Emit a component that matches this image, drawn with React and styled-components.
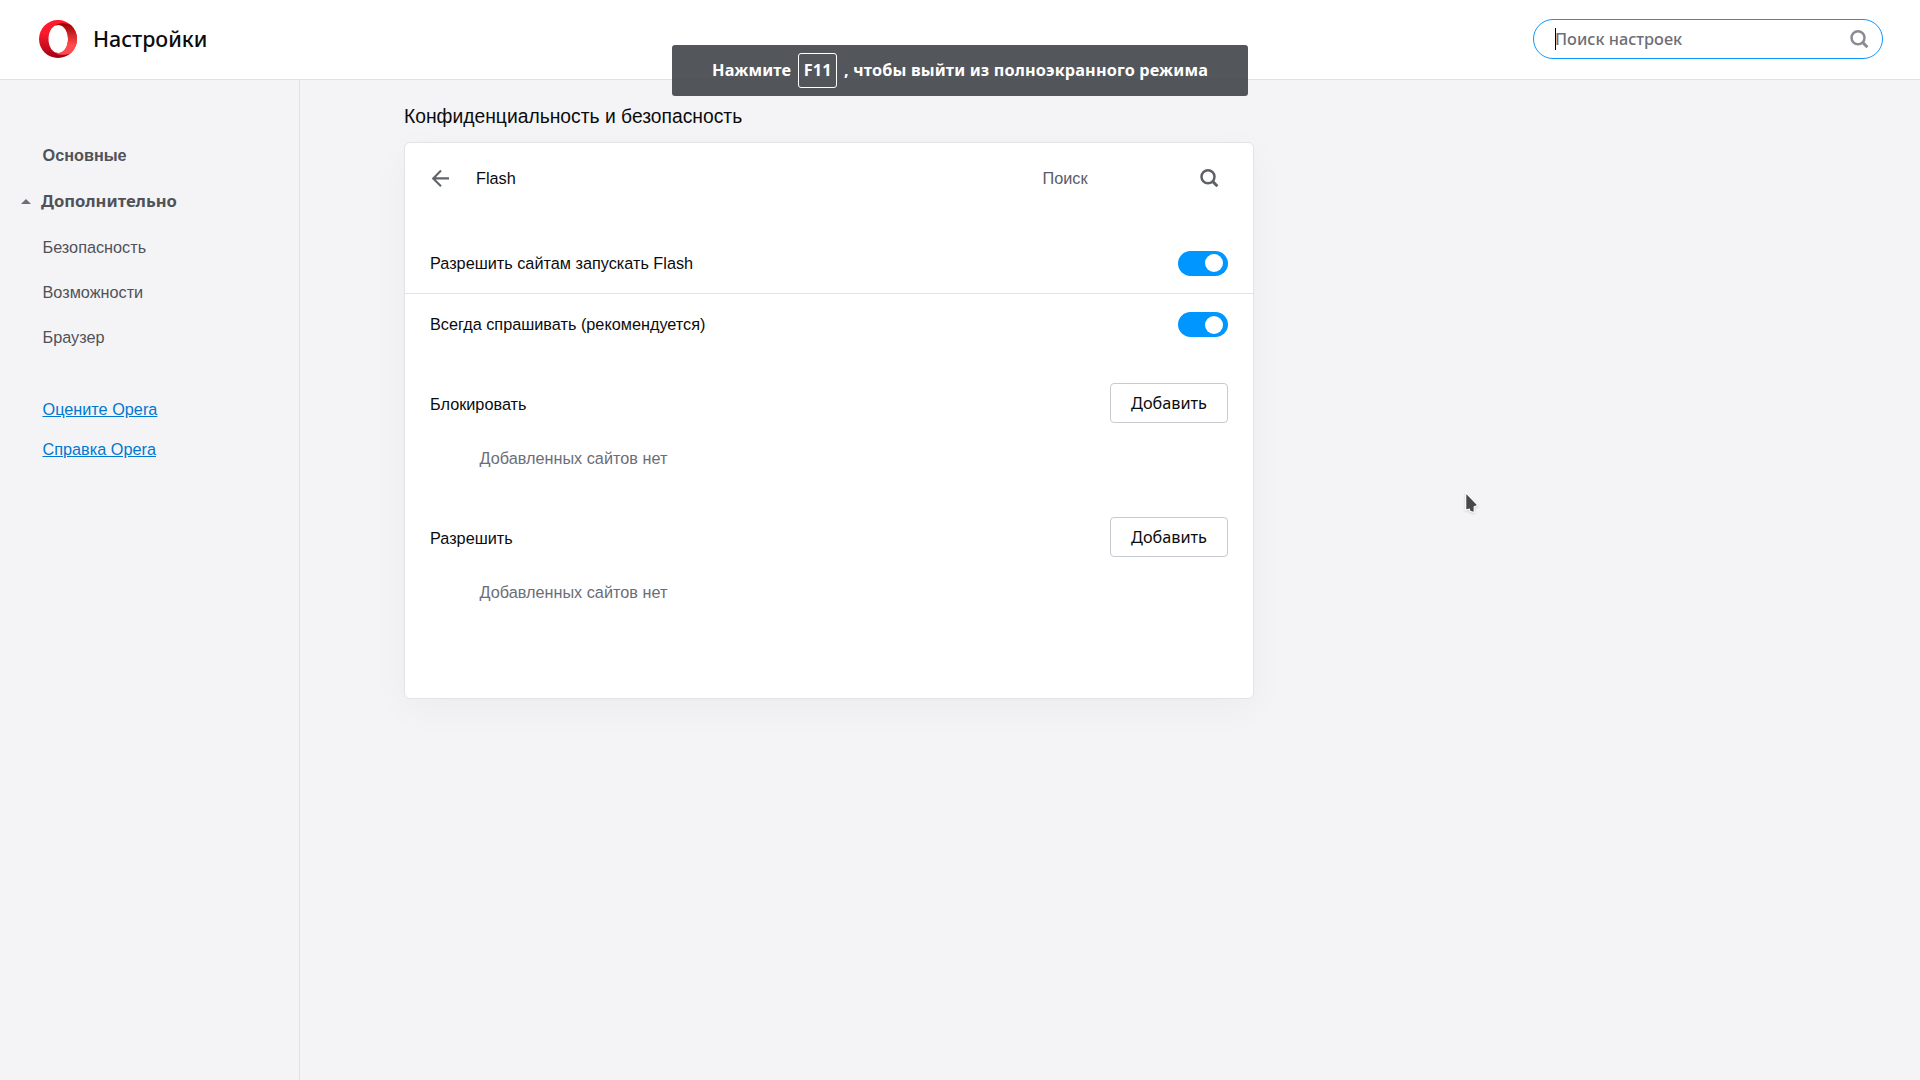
import React from 'react';
import styled, { createGlobalStyle } from 'styled-components';

const SANS = '"Liberation Sans", Arial, sans-serif';
const NOTO = '"Noto Sans", sans-serif';

const GlobalStyle = createGlobalStyle`
  *, *::before, *::after { box-sizing: border-box; }
  body { margin: 0; background: #f4f4f7; overflow: hidden; }
`;

const Page = styled.div`
  position: relative;
  display: flex;
  flex-direction: column;
  width: 1920px;
  height: 1080px;
  overflow: hidden;
  background: #f4f4f7;
  color: #0b0c0e;
  font: 16.25px/20px ${SANS};
`;

const Header = styled.header`
  display: flex;
  align-items: center;
  flex: none;
  height: 80px;
  padding: 0 37px 2px 39px;
  background: #fff;
  border-bottom: 1px solid #e1e1e4;
`;

const Logo = styled.svg`
  width: 38px;
  height: 38px;
  margin-right: 16px;
`;

const Title = styled.h1`
  flex: 1;
  margin: 0;
  padding-top: 1px;
  font: 500 21.4px/28px ${NOTO};
`;

const SearchBox = styled.div`
  display: flex;
  align-items: center;
  width: 350px;
  height: 40px;
  padding: 0 13px 0 21px;
  border: 1px solid #0c97fb;
  border-radius: 20px;
  color: #6d6e78;
  font: 500 16.3px/22px ${NOTO};
`;

const Caret = styled.span`
  width: 1px;
  height: 22px;
  margin-right: -1px;
  background: #000;
`;

const Placeholder = styled.span`
  flex: 1;
`;

const Icon = styled.svg`
  flex: none;
  display: block;
  width: ${(p) => p.$size}px;
  height: ${(p) => p.$size}px;
  color: ${(p) => p.$color};
`;

const Body = styled.div`
  display: flex;
  flex: 1;
`;

const Sidebar = styled.nav`
  display: flex;
  flex-direction: column;
  width: 300px;
  padding-top: 52px;
  border-right: 1px solid #e1e1e4;
  color: #505257;
`;

const NavItem = styled.div`
  display: flex;
  align-items: center;
  height: 45px;
  padding-left: 42.5px;
  font-weight: ${(p) => (p.$bold ? 700 : 400)};
`;

const NavGroup = styled(NavItem)`
  height: 47px;
  padding: 1px 0 0 21px;
  font: 700 16.6px/22px ${NOTO};
`;

const Triangle = styled.span`
  width: 0;
  margin-right: 10px;
  border: 5px solid transparent;
  border-top: 0;
  border-bottom-color: #6d6e78;
`;

const Links = styled.div`
  display: flex;
  flex-direction: column;
  margin-top: 30px;
`;

const NavLink = styled.a`
  display: flex;
  align-items: center;
  height: 40px;
  padding-left: 42.5px;
  color: #0078d2;
  text-decoration: underline;
`;

const Main = styled.main`
  padding: 25px 0 0 104px;
`;

const SectionTitle = styled.h2`
  margin: 0 0 13px;
  font: 400 19.3px/24px ${SANS};
`;

const Card = styled.section`
  width: 850px;
  height: 557px;
  background: #fff;
  border: 1px solid #e3e3e6;
  border-radius: 6px;
  box-shadow: 0 10px 38px rgba(0, 0, 0, 0.035);
`;

const CardHeader = styled.div`
  display: flex;
  align-items: center;
  height: 70px;
  margin-bottom: 20px;
  padding: 0 34px 0 25px;
`;

const CardTitle = styled.span`
  flex: 1;
  margin-left: 26px;
`;

const CardSearch = styled.span`
  width: 156.5px;
  color: #5a5c66;
`;

const ToggleRow = styled.div`
  display: flex;
  align-items: center;
  justify-content: space-between;
  height: ${(p) => (p.$divided ? 62 : 60)}px;
  padding: 0 25px;
  border-top: ${(p) => (p.$divided ? '1px solid #e3e3e6' : '0')};
`;

const RowLabel = styled.span`
  padding-bottom: ${(p) => (p.$divided ? 2 : 0)}px;
`;

const Toggle = styled.span`
  display: flex;
  align-items: center;
  justify-content: flex-end;
  width: 50px;
  height: 25px;
  padding-right: 5px;
  border-radius: 13px;
  background: #0096ff;

  &::after {
    content: '';
    width: 18px;
    height: 18px;
    border-radius: 50%;
    background: #fff;
  }
`;

const SiteList = styled.div`
  height: 134px;
  padding: 28px 25px 0;
`;

const ListHead = styled.div`
  display: flex;
  align-items: center;
  justify-content: space-between;
  height: 40px;
`;

const ListTitle = styled.span`
  padding-top: 1px;
`;

const Button = styled.button`
  width: 118px;
  height: 40px;
  padding: 0;
  border: 1px solid #c9c9d0;
  border-radius: 4px;
  background: #fff;
  color: #0b0c0e;
  font: 16.25px/22px ${NOTO};
`;

const Empty = styled.p`
  margin: 25px 0 0 49.5px;
  color: #6b6d78;
`;

const Toast = styled.div`
  position: absolute;
  top: 45px;
  left: 672px;
  display: flex;
  align-items: center;
  justify-content: center;
  width: 576px;
  height: 51px;
  border-radius: 3px;
  background: rgba(66, 69, 74, 0.91);
  color: #fff;
  font: 700 16.25px/22px ${NOTO};
  letter-spacing: 0.15px;
  white-space: pre;
`;

const ToastText = styled.span`
  padding-bottom: 2px;
`;

const Key = styled.kbd`
  display: flex;
  align-items: center;
  justify-content: center;
  width: 39px;
  height: 35px;
  margin: 0 7px;
  padding-bottom: 1px;
  border: 1px solid #fff;
  border-radius: 3px;
  font: inherit;
`;

const Pointer = styled.svg`
  position: absolute;
  left: 1464px;
  top: 491px;
  width: 16px;
  height: 24px;
  filter: drop-shadow(0 1px 1px rgba(0, 0, 0, 0.15));
`;

const SearchIcon = ({ color }) => (
  <Icon $size={20} $color={color} viewBox="0 0 20 20" fill="none" stroke="currentColor">
    <circle cx="9" cy="8.800" r="6.500" strokeWidth="2.500" />
    <path d="M13.600 13.400L18.400 18.200" strokeWidth="2.900" />
  </Icon>
);

const BackIcon = () => (
  <Icon $size={20} $color="#62646b" viewBox="0 0 20 20" fill="none" stroke="currentColor" strokeWidth="2.100">
    <path d="M19 10.400H3M11 2.600L3.200 10.400l7.800 7.800" />
  </Icon>
);

const OperaLogo = () => (
  <Logo viewBox="0 0 38 38">
    <defs>
      <linearGradient id="ring" x1="0" y1="0" x2="0" y2="1">
        <stop offset="0" stopColor="#ff1b2d" />
        <stop offset="0.35" stopColor="#fa1a2c" />
        <stop offset="1" stopColor="#a00014" />
      </linearGradient>
      <linearGradient id="fold" x1="0" y1="0" x2="0" y2="1">
        <stop offset="0" stopColor="#9c0000" />
        <stop offset="0.7" stopColor="#ff4b4b" />
        <stop offset="1" stopColor="#ff4b4b" />
      </linearGradient>
    </defs>
    <path
      fill="url(#ring)"
      fillRule="evenodd"
      d="M19 0a19 19 0 1 0 0 38a19 19 0 1 0 0-38zM19.300 5c5.700 0 9.700 6.300 9.700 14s-4 14-9.700 14s-9.800-6.300-9.800-14s4.100-14 9.800-14z"
    />
    <path
      fill="url(#fold)"
      d="M16 5.800C17.800 4.200 20 3.200 22.500 3.200c3.500 0 6.700 .700 9.300 1.700A19 19 0 0 1 31.700 33.200C29.200 34.300 25.500 34.800 22.500 34.800c-2.500 0-4.700-.900-6.500-2.600c1 .500 2.100 .800 3.300 .800c5.700 0 9.700-6.300 9.700-14s-4-14-9.700-14c-1.200 0-2.300 .300-3.300 .800z"
    />
  </Logo>
);

const lists = ['Блокировать', 'Разрешить'];

export default function App() {
  return (
    <Page>
      <GlobalStyle />
      <Header>
        <OperaLogo />
        <Title>Настройки</Title>
        <SearchBox>
          <Caret />
          <Placeholder>Поиск настроек</Placeholder>
          <SearchIcon color="#8b8b93" />
        </SearchBox>
      </Header>
      <Body>
        <Sidebar>
          <NavItem $bold>Основные</NavItem>
          <NavGroup>
            <Triangle />
            Дополнительно
          </NavGroup>
          <NavItem>Безопасность</NavItem>
          <NavItem>Возможности</NavItem>
          <NavItem>Браузер</NavItem>
          <Links>
            <NavLink>Оцените Opera</NavLink>
            <NavLink>Справка Opera</NavLink>
          </Links>
        </Sidebar>
        <Main>
          <SectionTitle>Конфиденциальность и безопасность</SectionTitle>
          <Card>
            <CardHeader>
              <BackIcon />
              <CardTitle>Flash</CardTitle>
              <CardSearch>Поиск</CardSearch>
              <SearchIcon color="#5f6168" />
            </CardHeader>
            <ToggleRow>
              <RowLabel>Разрешить сайтам запускать Flash</RowLabel>
              <Toggle />
            </ToggleRow>
            <ToggleRow $divided>
              <RowLabel $divided>Всегда спрашивать (рекомендуется)</RowLabel>
              <Toggle />
            </ToggleRow>
            {lists.map((name) => (
              <SiteList key={name}>
                <ListHead>
                  <ListTitle>{name}</ListTitle>
                  <Button>Добавить</Button>
                </ListHead>
                <Empty>Добавленных сайтов нет</Empty>
              </SiteList>
            ))}
          </Card>
        </Main>
      </Body>
      <Toast>
        <ToastText>Нажмите</ToastText>
        <Key>F11</Key>
        <ToastText>, чтобы выйти из полноэкранного режима</ToastText>
      </Toast>
      <Pointer viewBox="0 0 16 24">
        <path
          d="M1.700 1.500V19L5.400 18.200L6 20.300L10.200 21.500V15.800L13.800 14.200z"
          fill="#48484a"
          stroke="#fff"
          strokeWidth="1.200"
        />
      </Pointer>
    </Page>
  );
}
